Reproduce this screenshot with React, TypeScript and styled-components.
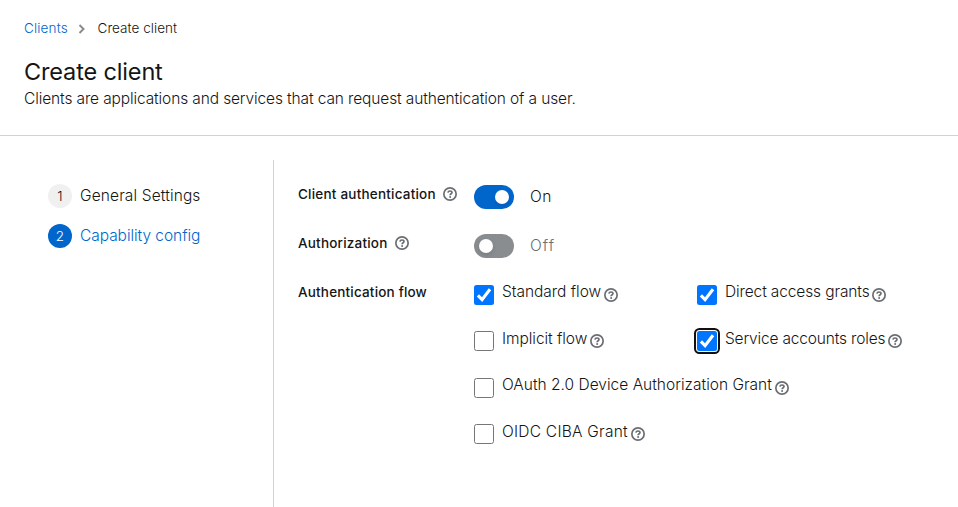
import React from 'react';
import styled, { createGlobalStyle } from 'styled-components';

const GlobalStyle = createGlobalStyle`
  *, *::before, *::after { box-sizing: border-box; }
  body {
    margin: 0;
    background: #fff;
    color: #151515;
    font-family: Inter, 'Liberation Sans', sans-serif;
    font-size: 15.5px;
    font-weight: 300;
    line-height: 24px;
    overflow: hidden;
  }
`;

const Page = styled.div`
  display: flex;
  flex-direction: column;
  height: 507px;
`;

const Header = styled.header`
  height: 136px;
  padding: 18px 24px 0;
  border-bottom: 1px solid #d2d2d2;
`;

const Breadcrumb = styled.nav`
  display: flex;
  align-items: center;
  height: 21px;
  font-size: 13.5px;
  line-height: 21px;
`;

const Separator = styled.svg`
  width: 7px;
  height: 10px;
  margin: 0 12.5px 0 10px;
`;

const Label = styled.span<{ $track?: number }>`
  white-space: nowrap;
  letter-spacing: ${p => p.$track ?? 0}px;
`;

const CrumbLink = styled.a`
  width: 44px;
  color: #06c;
  letter-spacing: 0.15px;
  white-space: nowrap;
`;

const Title = styled.h1`
  margin: 17px 0 0;
  font-size: 23.5px;
  font-weight: 400;
  letter-spacing: -0.15px;
  line-height: 31px;
`;

const Description = styled.p`
  margin: 0;
  letter-spacing: -0.12px;
  white-space: nowrap;
`;

const Body = styled.main`
  display: flex;
  flex: 1;
  padding-top: 24px;
`;

const Steps = styled.ol`
  display: flex;
  flex-direction: column;
  gap: 16px;
  width: 274px;
  margin: 0;
  padding: 24px 0 0 48px;
  list-style: none;
  border-right: 1px solid #d2d2d2;
`;

const Step = styled.li<{ $current?: boolean }>`
  display: flex;
  gap: 8px;
  height: 24px;
  color: ${p => (p.$current ? '#06c' : '#151515')};
`;

const StepNumber = styled.span<{ $current?: boolean }>`
  width: 24px;
  height: 24px;
  border-radius: 50%;
  background: ${p => (p.$current ? '#06c' : '#f0f0f0')};
  color: ${p => (p.$current ? '#fff' : '#151515')};
  font-size: 13.5px;
  text-align: center;
`;

const Form = styled.form`
  flex: 1;
  padding: 25px 0 0 24px;
`;

const Field = styled.div`
  display: grid;
  grid-template-columns: 176px 1fr;
  height: 49px;
`;

const FieldLabel = styled.div`
  display: flex;
  align-items: center;
  gap: 7.5px;
  height: 18px;
  font-size: 13.5px;
  font-weight: 500;
`;

const SwitchRow = styled.div<{ $on?: boolean }>`
  display: flex;
  gap: 16px;
  height: 24px;
  color: ${p => (p.$on ? '#151515' : '#6a6e73')};
`;

const Toggle = styled.span<{ $on?: boolean }>`
  display: flex;
  align-items: center;
  justify-content: ${p => (p.$on ? 'flex-end' : 'flex-start')};
  width: 40px;
  height: 24px;
  padding: 0 5px;
  border-radius: 12px;
  background: ${p => (p.$on ? '#06c' : '#8a8d90')};
`;

const Knob = styled.span`
  width: 14px;
  height: 14px;
  border-radius: 50%;
  background: #fff;
  box-shadow: 0 2px 4px rgba(3, 3, 3, 0.12);
`;

const Flows = styled.div`
  display: grid;
  grid-template-columns: 223px 1fr;
  grid-auto-rows: 46.4px;
  padding-top: 2px;
`;

const Option = styled.label<{ $wide?: boolean }>`
  display: flex;
  align-items: flex-start;
  gap: 8px;
  grid-column: ${p => (p.$wide ? '1 / -1' : 'auto')};
`;

const Box = styled.span<{ $checked?: boolean; $focused?: boolean }>`
  display: flex;
  width: 20px;
  height: 20px;
  border: ${p => (p.$checked ? 'none' : '1px solid #767676')};
  border-radius: 2.5px;
  background: ${p => (p.$checked ? '#0075ff' : '#fff')};
  box-shadow: ${p => (p.$focused ? '0 0 0 1px #fff, 0 0 0 3px #101010' : 'none')};
`;

const OptionText = styled.span`
  display: flex;
  align-items: center;
  gap: 2.7px;
  height: 20px;
`;

const OptionLabel = styled(Label)`
  margin-top: -5.3px;
`;

const Icon = styled.svg`
  flex: none;
  width: 14px;
  height: 14px;
`;

const Help = () => (
  <Icon viewBox="0 0 14 14" fill="none" stroke="#6a6e73">
    <circle cx="7" cy="7" r="6.15" strokeWidth="1.7" />
    <path d="M4.9 5.7C5.1 4.5 5.9 4 7 4c1.2 0 2 .6 2 1.6C9 6.8 7.1 6.7 7.1 8.2" strokeWidth="1.7" />
    <circle cx="7.1" cy="10" r="1" fill="#6a6e73" stroke="none" />
  </Icon>
);

const Check = () => (
  <svg width="20" height="20" viewBox="0 0 20 20" fill="none">
    <path d="M3.9 10.3l4.2 4.3 7.9-10.3" stroke="#fff" strokeWidth="3.1" />
  </svg>
);

const flows = [
  { text: 'Standard flow', track: -0.03, checked: true },
  { text: 'Direct access grants', track: -0.12, checked: true },
  { text: 'Implicit flow', track: -0.05 },
  { text: 'Service accounts roles', track: -0.17, checked: true, focused: true },
  { text: 'OAuth 2.0 Device Authorization Grant', track: 0.01, wide: true },
  { text: 'OIDC CIBA Grant', track: 0.25, wide: true },
];

export default function App() {
  return (
    <Page>
      <GlobalStyle />
      <Header>
        <Breadcrumb>
          <CrumbLink>Clients</CrumbLink>
          <Separator viewBox="0 0 7 10" fill="none">
            <path d="M1.5 1l4 4-4 4" stroke="#8a8d90" strokeWidth="2" />
          </Separator>
          <Label $track={0.05}>Create client</Label>
        </Breadcrumb>
        <Title>Create client</Title>
        <Description>
          Clients are applications and services that can request authentication of a user.
        </Description>
      </Header>
      <Body>
        <Steps>
          <Step>
            <StepNumber>1</StepNumber>
            <Label $track={0.13}>General Settings</Label>
          </Step>
          <Step $current>
            <StepNumber $current>2</StepNumber>
            <Label $track={-0.05}>Capability config</Label>
          </Step>
        </Steps>
        <Form>
          <Field>
            <FieldLabel>
              <Label $track={0.21}>Client authentication</Label>
              <Help />
            </FieldLabel>
            <SwitchRow $on>
              <Toggle $on><Knob /></Toggle>
              <Label $track={0.6}>On</Label>
            </SwitchRow>
          </Field>
          <Field>
            <FieldLabel>
              <Label $track={0.2}>Authorization</Label>
              <Help />
            </FieldLabel>
            <SwitchRow>
              <Toggle><Knob /></Toggle>
              <Label $track={1}>Off</Label>
            </SwitchRow>
          </Field>
          <Field>
            <FieldLabel>
              <Label $track={0.18}>Authentication flow</Label>
            </FieldLabel>
            <Flows>
              {flows.map(f => (
                <Option key={f.text} $wide={f.wide}>
                  <Box $checked={f.checked} $focused={f.focused}>{f.checked && <Check />}</Box>
                  <OptionText>
                    <OptionLabel $track={f.track}>{f.text}</OptionLabel>
                    <Help />
                  </OptionText>
                </Option>
              ))}
            </Flows>
          </Field>
        </Form>
      </Body>
    </Page>
  );
}
